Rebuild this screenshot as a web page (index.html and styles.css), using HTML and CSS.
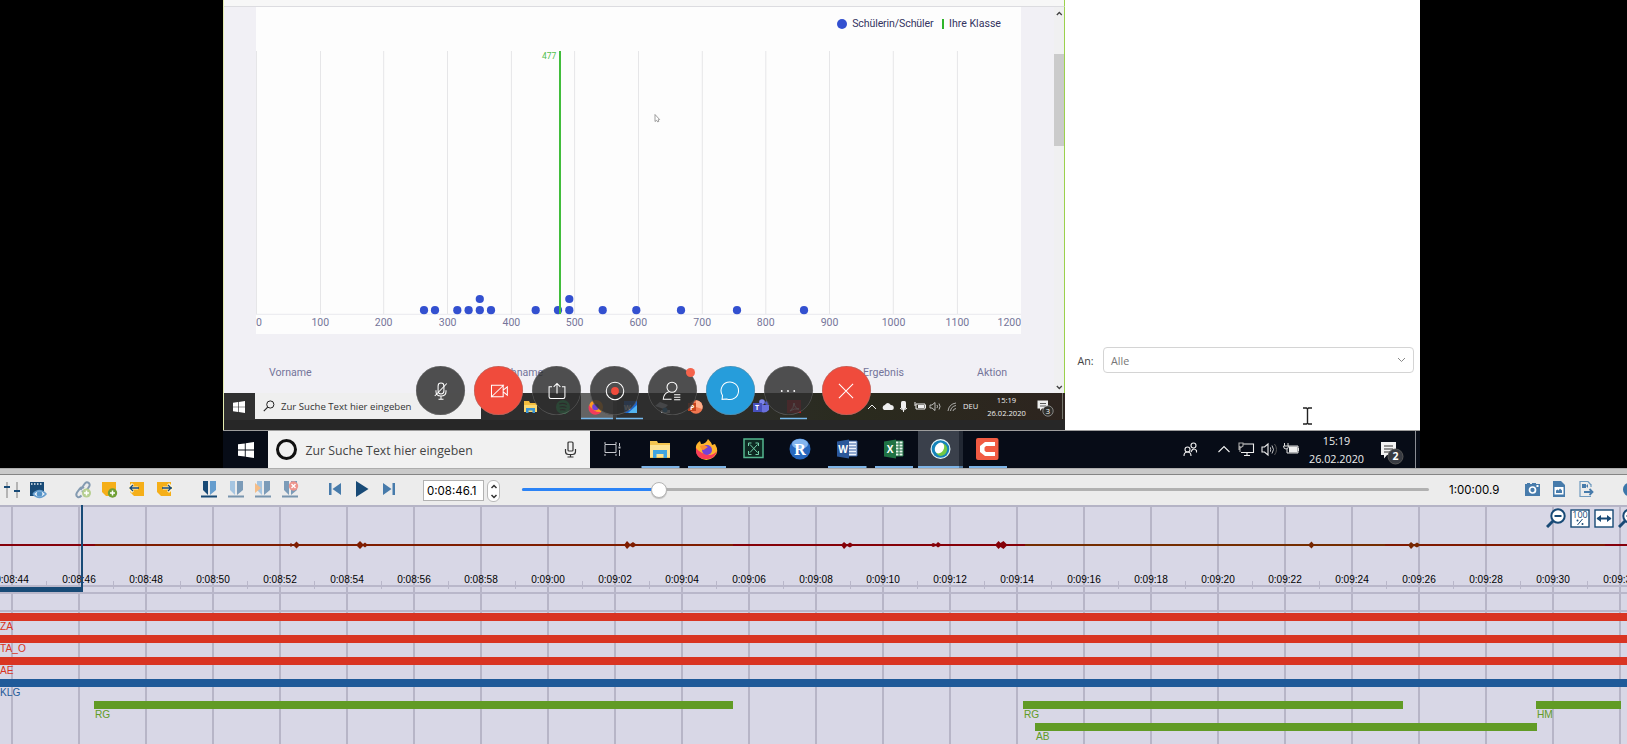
FILE: index.html
```
<!DOCTYPE html>
<html lang="de">
<head>
<meta charset="utf-8">
<title>Videoanalyse</title>
<link rel="stylesheet" href="styles.css">
</head>
<body>
<main class="app">
  <section class="video">
    <div class="desktop">
      <div class="upper">
        <div class="shared">
          <div class="browser-strip"></div>
          <div class="page">
            <div class="page-main">
              <div class="card">
                <div class="legend"><i class="dot"></i><span class="lg1">Schülerin/Schüler</span><i class="tick"></i><span class="lg2">Ihre Klasse</span></div>
                <svg class="chart" width="765" height="286" viewBox="256 48 765 286">
                  <path d="M256.5 51V314M320.5 51V314M383.7 51V314M447.5 51V314M511.4 51V314M574.6 51V314M638.5 51V314M702.3 51V314M765.8 51V314M829.5 51V314M893.3 51V314M957.4 51V314" stroke="#e6e6e8"/>
                  <path d="M256 314.3H1021" stroke="#e9e9ee"/>
                  <g fill="#3350d0">
                    <circle cx="424" cy="310.2" r="4.1"/><circle cx="435" cy="310.2" r="4.1"/><circle cx="457.3" cy="310.2" r="4.1"/><circle cx="468.6" cy="310.2" r="4.1"/><circle cx="479.8" cy="310.2" r="4.1"/><circle cx="491" cy="310.2" r="4.1"/><circle cx="535.7" cy="310.2" r="4.1"/><circle cx="558" cy="310.2" r="4.1"/><circle cx="569.3" cy="310.2" r="4.1"/><circle cx="602.7" cy="310.2" r="4.1"/><circle cx="636.3" cy="310.2" r="4.1"/><circle cx="681" cy="310.2" r="4.1"/><circle cx="737" cy="310.2" r="4.1"/><circle cx="804" cy="310.2" r="4.1"/>
                    <circle cx="479.8" cy="299" r="4.1"/><circle cx="569.3" cy="299" r="4.1"/>
                  </g>
                  <path d="M560 51V314" stroke="#41bd3c" stroke-width="2"/>
                  <text x="556.3" y="59.300" class="mean">477</text>
                  <g class="axis">
                    <text x="259" y="326">0</text><text x="320.300" y="326">100</text><text x="383.600" y="326">200</text><text x="447.600" y="326">300</text><text x="511.400" y="326">400</text><text x="574.600" y="326">500</text><text x="638.300" y="326">600</text><text x="702.200" y="326">700</text><text x="765.700" y="326">800</text><text x="829.500" y="326">900</text><text x="893.500" y="326">1000</text><text x="957.400" y="326">1100</text><text x="1009.300" y="326">1200</text>
                  </g>
                  <path d="M655 114.500v7l1.600-1.200 1.200 1.700 1-.6-.7-1.600 1.500-.3z" fill="#fff" stroke="#777" stroke-width=".7"/>
                </svg>
              </div>
              <div class="thead"><span class="c1">Vorname</span><span class="c2">Nachname</span><span class="c3">Ergebnis</span><span class="c4">Aktion</span></div>
            </div>
            <div class="scrollbar">
              <svg width="10" height="386" viewBox="0 0 10 386"><rect y="47" width="10" height="92" fill="#cbcbcb"/><path d="M2.800 8l2.500-2.500L7.800 8M2.800 379l2.500 2.500 2.500-2.500" fill="none" stroke="#444" stroke-width="1.300"/></svg>
            </div>
          </div>
          <div class="inner-bar">
            <div class="in-start"><svg width="12" height="12" viewBox="0 0 16 16"><path d="M0 2.300L6.800 1.400V7.600H0zM7.700 1.200L16 0V7.600H7.700zM0 8.400H6.800V14.600L0 13.700zM7.700 8.400H16V16L7.700 14.800z" fill="#fff"/></svg></div>
            <div class="in-search"><svg width="12" height="12" viewBox="0 0 12 12"><circle cx="7.300" cy="4.500" r="3.600" fill="none" stroke="#222"/><path d="M4.700 7.200L.8 11.200" stroke="#222" stroke-width="1.100"/></svg><span>Zur Suche Text hier eingeben</span></div>
            <svg class="in-apps" width="384" height="27" viewBox="481 393 384 27">
              <rect x="581" y="393" width="32" height="26" fill="#646464"/><rect x="613" y="393" width="4" height="26" fill="#3c3c3c"/>
              <path d="M524 401h5l1 2h7v9h-13z" fill="#f3bd3e"/><path d="M524 405h13v7h-13z" fill="#fbd971"/><path d="M526 413v-5h9v5h-2.500v-2.500h-4V413z" fill="#3a95d5"/>
              <circle cx="563" cy="407" r="7" fill="#1ec15c"/><path d="M559 404q4-1.500 8 .5M559.500 407q3.500-1 7 .5M560 410q3-1 5.500.3" fill="none" stroke="#222" stroke-width="1.200"/>
              <circle cx="596" cy="407" r="7" fill="#ff9a22"/><path d="M589 405a7 7 0 0 0 12 7q-7 1-12-7" fill="#f33b5c"/><circle cx="595.500" cy="407" r="3.300" fill="#7040d8"/>
              <rect x="624" y="401" width="13" height="12" fill="#1d66d0"/><path d="M628 413l9-8v8z" fill="#52b4f0"/><text x="624" y="410" class="glyph">W</text>
              <path d="M655 406l5-4 8 3-4 4zM661 410h9v3h-9z" fill="#b8c0cb"/><circle cx="665" cy="410" r="2.500" fill="#247bb8"/>
              <circle cx="696" cy="407" r="6.700" fill="#f17750"/><path d="M696 407v-6.700a6.700 6.700 0 0 1 6.300 8.700z" fill="#ffae8a"/><rect x="688" y="403" width="8" height="8" fill="#c4431f"/><text x="690" y="410" class="glyph">P</text>
              <circle cx="762" cy="402" r="2.800" fill="#7b83eb"/><circle cx="767" cy="403" r="2" fill="#5059c9"/><path d="M758 405h11v5q-5 5-11 0z" fill="#6970dc"/><rect x="753" y="403" width="9" height="9" fill="#4750bd"/><text x="755" y="410" class="glyph">T</text>
              <rect x="787" y="400" width="14" height="13" fill="#c20d1a"/><path d="M790 411q4-3 4-8 1 6 5 6-5-1-9 2" fill="none" stroke="#fff" stroke-width=".8"/>
              <path d="M581 418.500h32M616 418.500h27M780 418.500h27" stroke="#75b9ed" stroke-width="1.500"/>
            </svg>
            <svg class="in-tray" width="97" height="26" viewBox="866 393 97 26">
              <path d="M868 409l4-4 4 4" fill="none" stroke="#eee"/><path d="M884 410a2.700 2.700 0 0 1 .8-5q3-4 6 0 3 0 3 3 0 2-2 2z" fill="#eee"/><rect x="901" y="401" width="5" height="8" rx="1.500" fill="#eee"/><path d="M903.500 409v3M900 408q3.500 4 7 0" stroke="#eee" fill="none"/><path d="M916 404h9v5h-9zM925.500 405v3M915 402v4" stroke="#eee" fill="none"/><rect x="918" y="405" width="6" height="3" fill="#eee"/><path d="M930 405h2l3-2.500v8l-3-2.500h-2zM937 405q1 1.500 0 3M939 403.500q2 3 0 6" fill="none" stroke="#ddd" stroke-width=".8"/><path d="M948 411q1-7 8-8M950.500 411q.5-4.500 5.500-5.500M953 411q0-2 3-2.500" fill="none" stroke="#ccc" stroke-width=".8"/>
            </svg>
            <span class="deu">DEU</span>
            <div class="in-clock"><span>15:19</span><span>26.02.2020</span></div>
            <svg width="28" height="26" viewBox="1036 393 28 26"><path d="M1037.500 400.500h10.500v8h-6l-2 2.500V408.500h-2.500z" fill="#eee"/><path d="M1040 403.500h6M1040 406h6" stroke="#333" stroke-width=".8"/><circle cx="1048" cy="411" r="5.200" fill="#302f2b" stroke="#aaa" stroke-width=".7"/><text x="1045.800" y="414" class="glyph7">3</text><path d="M1062.500 393v26" stroke="#77776e"/></svg>
          </div>
          <div class="inner-foot"></div>
        </div>
        <div class="chat">
          <div class="to"><label>An:</label><div class="select"><span>Alle</span><svg width="9" height="6" viewBox="0 0 9 6"><path d="M1 1l3.500 3.500L8 1" fill="none" stroke="#888"/></svg></div></div>
          <svg class="ibeam" width="11" height="18" viewBox="0 0 11 18"><path d="M1 1h3.500l1 1 1-1H10M5.500 2v14M1 17h3.500l1-1 1 1H10" fill="none" stroke="#222" stroke-width="1.400"/></svg>
        </div>
      </div>
      <div class="taskbar">
        <div class="start"><svg width="16" height="16" viewBox="0 0 16 16"><path d="M0 2.300L6.800 1.400V7.600H0zM7.700 1.200L16 0V7.600H7.700zM0 8.400H6.800V14.600L0 13.700zM7.700 8.400H16V16L7.700 14.800z" fill="#fff"/></svg></div>
        <div class="search"><i class="ring"></i><span>Zur Suche Text hier eingeben</span><svg width="13" height="17" viewBox="0 0 13 17"><rect x="4" y="1" width="5" height="9" rx="1" fill="none" stroke="#333" stroke-width="1.200"/><path d="M1.500 8v2.500q0 3 3 3h4q3 0 3-3V8M6.500 13.500V16M3.500 16h6" fill="none" stroke="#333" stroke-width="1.200"/></svg></div>
        <svg class="apps" width="430" height="37" viewBox="590 431 430 37">
          <rect x="918" y="431" width="41" height="37" fill="#3a404b"/><rect x="959" y="431" width="4" height="37" fill="#222833"/>
          <path d="M605 444v-2M616 444v-2M605 454v2M616 454v2M605 444.500h11v8h-11zM619.500 443v3M619.500 450v6" fill="none" stroke="#c8cad0"/><rect x="618.500" y="446.500" width="2" height="2" fill="#c8cad0"/>
          <path d="M650 441h7l1 2h12v15h-20z" fill="#f4c550"/><path d="M650 445h20v12h-20z" fill="#fde394"/><path d="M653 458v-8h14v8h-3.500v-4h-7v4z" fill="#41a5e1"/>
          <path d="M696 450q-1-6 4-9l1 3q5 0 7-5 4 4 4 6l3-1q5 8-1 13-8 6-15 0-3-3-3-7" fill="#ffb42d"/><path d="M696 448q-1 12 12 11 7-1 9-8-5 6-12 3-6-2-9-6" fill="#f83c59"/><circle cx="707" cy="450" r="5" fill="#7442d7"/><path d="M700 446q4-2 8 1l-3 2q-3 3-5-3" fill="#ff8b31"/>
          <rect x="744" y="439" width="19" height="18.500" fill="#0e2922" stroke="#54b68f" stroke-width="1.500"/><path d="M748.500 446v-3h3M755.500 443h3v3M758.500 451v3.500h-3M751.500 454.500h-3V451M750 444.500l7.500 8M757.500 444.500l-7.500 8" fill="none" stroke="#75d1ab"/>
          <circle cx="800" cy="449" r="10.500" fill="#2767bd"/><ellipse cx="800" cy="444" rx="8" ry="5" fill="#83b5ee"/><text x="800" y="455" class="rglyph">R</text>
          <path d="M848 441h9v15h-9z" fill="#eef3fb" stroke="#315aa0"/><path d="M849 444h7M849 447h7M849 450h7M849 453h7" stroke="#315aa0"/><path d="M837 441.500l12-2v19l-12-2z" fill="#2b579a"/><text x="843" y="453" class="office">W</text>
          <path d="M895 441h8v15h-8z" fill="#e8f5ec" stroke="#217346"/><path d="M896 444h7M896 447h7M896 450h7M896 453h7M899 441v15" stroke="#217346"/><path d="M884 441.500l12-2v19l-12-2z" fill="#1f7244"/><text x="890" y="453" class="office">X</text>
          <circle cx="940.500" cy="449" r="10" fill="#e8f5f9"/><circle cx="940.500" cy="449" r="8.800" fill="#1583ba"/><ellipse cx="941.500" cy="450" rx="5.500" ry="6.300" fill="#72c944" transform="rotate(30 942 450)"/><ellipse cx="939.500" cy="448" rx="4.300" ry="5.800" fill="#fff" transform="rotate(30 939.500 448)"/>
          <rect x="976" y="438" width="22.500" height="22" rx="2" fill="#f15b43"/><path d="M995 442h-10l-5 4v6l5 4h10v-4h-9l-1.500-1.500v-3l1.500-1.500h9z" fill="#fff"/>
          <path d="M641.500 467h38M688 467h38M828 467h38.500M875 467h38M918 467h41M969 467h38" stroke="#7db3e6" stroke-width="2"/><path d="M959 467h4" stroke="#52799f" stroke-width="2"/>
        </svg>
        <svg class="tray" width="90" height="37" viewBox="1180 431 90 37"><g fill="none" stroke="#eee" stroke-width="1.100"><circle cx="1193.500" cy="445.500" r="2.500"/><path d="M1191 452q2-5 5.500-1.500v2"/><circle cx="1187.500" cy="449.500" r="2.500"/><path d="M1184 456q0-4 3.500-4t3.500 4M1218.500 452l5.500-5.500 5.500 5.500"/><path d="M1243 444h10.500v8.500H1241M1247 453v2.500M1244 455.500h6"/><path d="M1239 443h4v3l-4 3zM1240 446v6" stroke="#aaa"/><path d="M1262 447h2.500l3.500-3v11l-3.500-3H1262z"/></g></svg>
        <svg width="30" height="37" viewBox="1270 431 30 37"><g fill="none" stroke="#ddd"><path d="M1270 447q1.500 2.500 0 5M1272 445.500q3 4 0 8" stroke-width=".9"/><path d="M1274.500 444q4 5.500 0 11" stroke="#555"/><path d="M1288 446h10v7h-11v-4M1298.500 448v3M1284.500 443v3M1288 443v3M1283.500 446h5q0 3-2.500 3t-2.500-3"/></g><rect x="1289" y="446.500" width="8.500" height="6" fill="#eee"/></svg>
        <div class="clock"><span>15:19</span><span>26.02.2020</span></div>
        <svg width="52" height="37" viewBox="1368 431 52 37"><path d="M1381 442h15v13h-9l-3 3.500V455h-3z" fill="#f2f2f2"/><path d="M1384 446h9M1384 449h9M1384 452h6" stroke="#333"/><circle cx="1395.500" cy="456.500" r="7.500" fill="#383b42" stroke="#555"/><text x="1395.500" y="460.200" class="badge">2</text><path d="M1415.500 431v37" stroke="#8a8d94"/></svg>
      </div>
      <div class="controls">
        <div class="btn"><svg viewBox="0 0 24 24"><rect x="8.500" y="2.500" width="7" height="13" rx="3.500"/><path d="M6 11v2q0 5 6 5t6-5v-2M12 18v4M9 22h6M4.500 18L19 3"/></svg></div>
        <div class="btn red"><svg viewBox="0 0 24 24"><path d="M3 5h14v14H3zM17 11l5-4v10l-5-4M2.500 19.500L18 4.500"/></svg></div>
        <div class="btn"><svg viewBox="0 0 24 24"><path d="M6 7H2.500v12q0 2 2 2h15q2 0 2-2V7H18M12 15V3M8 7l4-4 4 4"/></svg></div>
        <div class="btn"><svg viewBox="0 0 24 24"><circle cx="12" cy="12" r="10.500"/><circle cx="12" cy="12" r="4.700" class="rec"/></svg></div>
        <div class="btn"><i class="note"></i><svg viewBox="0 0 24 24"><circle cx="12" cy="7.500" r="6"/><path d="M8 13q-6 2-6.500 9h10M14.500 16.500H22M14.500 19.500H22M14.500 22.500H22"/></svg></div>
        <div class="btn blue"><svg viewBox="0 0 24 24"><path d="M2.500 22L3 17.500A10.500 10.500 0 1 1 8 21.500z"/></svg></div>
        <div class="btn"><svg viewBox="0 0 24 24" class="solid"><circle cx="4.500" cy="12" r="1.100"/><circle cx="12" cy="12" r="1.100"/><circle cx="19.500" cy="12" r="1.100"/></svg></div>
        <div class="btn red"><svg viewBox="0 0 24 24"><path d="M3.500 3.500l17 17M20.500 3.500l-17 17"/></svg></div>
      </div>
    </div>
  </section>
  <div class="splitter"></div>
  <section class="toolbar">
    <div class="group g1">
      <svg width="18" height="20" viewBox="0 0 18 20"><path d="M4 2v16M14 2v16" stroke="#b4b4b4" stroke-width="2"/><path d="M1 7h6M11 11h6" stroke="#184a76" stroke-width="2"/></svg>
      <svg width="18" height="20" viewBox="0 0 18 20"><path d="M0 2h14v14H0z" fill="#184a76"/><path d="M1 4h12" stroke="#e8eef3" stroke-dasharray="1.500 1.500" stroke-width="1.500"/><path d="M3 14q6.500-7 13 0-6.500 7-13 0" fill="#e9f1f8" stroke="#659dce" stroke-width="1.500"/><circle cx="9.500" cy="14" r="2.800" fill="#5392c8"/></svg>
    </div>
    <div class="group g2">
      <svg width="18" height="20" viewBox="0 0 18 20"><g fill="none" stroke="#849bb1" stroke-width="2"><path d="M5.500 10l4-6q2-3 4.500-.8 1.500 2-.5 4.300L11 11q-2 2-4 0M9 8q-2-1.500-4 .5l-3 4q-1.700 3 .7 4.500 2 .6 3.800-1.500"/></g><circle cx="11.500" cy="13" r="4.500" fill="#b6cf91"/><path d="M11.500 10.500v5M9 13h5" stroke="#fff" stroke-width="1.500"/></svg>
      <svg width="18" height="20" viewBox="0 0 18 20"><path d="M0 2h14v14H4l-4-4z" fill="#f5af19"/><circle cx="10.500" cy="13" r="4.700" fill="#6f9f35"/><path d="M10.500 10.500v5M8 13h5" stroke="#fff" stroke-width="1.500"/></svg>
      <svg width="18" height="20" viewBox="0 0 18 20"><path d="M1 2h14v14H5l-4-4z" fill="#f5af19"/><path d="M0 8h9M4 4L0 8l4 4" stroke="#fff3d0" stroke-width="3" fill="none"/><path d="M1 8h9M4 5L1 8l3 3" stroke="#184a76" stroke-width="1.300" fill="none"/></svg>
      <svg width="18" height="20" viewBox="0 0 18 20"><path d="M1 2h14v14H5l-4-4z" fill="#f5af19"/><path d="M7 8h9M12 4l4 4-4 4" stroke="#fff3d0" stroke-width="3" fill="none"/><path d="M6 8h10M12 5l3 3-3 3" stroke="#184a76" stroke-width="1.300" fill="none"/></svg>
    </div>
    <div class="group g3">
      <svg width="18" height="20" viewBox="0 0 18 20"><path d="M2 1h5v14l-5-5z" fill="#184a76"/><path d="M9 1h6v9l-6 5z" fill="#659dce"/><path d="M0 16.500h16" stroke="#184a76" stroke-width="2"/></svg>
      <svg width="18" height="20" viewBox="0 0 18 20"><path d="M2 1h5v14l-5-5z" fill="#a5c5e1"/><path d="M9 1h6v9l-6 5z" fill="#7b9bb8"/><path d="M0 16.500h16" stroke="#7895ae" stroke-width="2"/></svg>
      <svg width="18" height="20" viewBox="0 0 18 20"><path d="M2 1h5v14l-5-5z" fill="#a5c5e1"/><path d="M0 3l6 5-6 5z" fill="#f5bd87"/><path d="M9 1h6v9l-6 5z" fill="#7b9bb8"/><path d="M0 16.500h16" stroke="#7895ae" stroke-width="2"/></svg>
      <svg width="18" height="20" viewBox="0 0 18 20"><path d="M2 1h5v14l-5-5zM9 1h6v9l-6 5z" fill="#7b9bb8"/><circle cx="11.500" cy="6" r="4.700" fill="#ee958d"/><path d="M9.500 4l4 4M13.500 4l-4 4" stroke="#fff" stroke-width="1.400"/><path d="M0 16.500h16" stroke="#7895ae" stroke-width="2"/></svg>
    </div>
    <div class="group g4">
      <svg width="18" height="20" viewBox="0 0 18 20"><path d="M1 3h2.500v12H1zM13 3v12L4.500 9z" fill="#477bab"/></svg>
      <svg width="18" height="20" viewBox="0 0 18 20"><path d="M1 1l12.500 8L1 17z" fill="#184a76"/></svg>
      <svg width="18" height="20" viewBox="0 0 18 20"><path d="M10.500 3H13v12h-2.500zM1 3v12l8.500-6z" fill="#477bab"/></svg>
    </div>
    <input class="time" value="0:08:46.1" aria-label="Zeit">
    <div class="stepper"><svg width="12" height="21" viewBox="0 0 12 21"><path d="M3.500 7L6 4.500 8.500 7M3.500 14L6 16.500 8.500 14" fill="none" stroke="#333" stroke-width="1.500"/></svg></div>
    <div class="slider"><div class="track"><div class="fill" style="width:15.1%"></div></div><i class="knob" style="left:15.1%"></i></div>
    <span class="total">1:00:00.9</span>
    <div class="group g5">
      <svg width="16" height="20" viewBox="0 0 16 20"><path d="M0 4h2V3h3v1h2V3h4v1h4v12H0z" fill="#477bab"/><circle cx="7.500" cy="10" r="3" fill="none" stroke="#fff" stroke-width="1.700"/><rect x="11.500" y="5" width="2" height="2" fill="#fff"/></svg>
      <svg width="16" height="20" viewBox="0 0 16 20"><path d="M1 1h8l4 4v12H1z" fill="#477bab"/><rect x="2.500" y="7" width="9" height="7.500" fill="#fff"/><path d="M4 13V10.500l1.500-1 1 1 1.500-2 2 2V13z" fill="#477bab"/></svg>
      <svg width="16" height="20" viewBox="0 0 16 20"><path d="M12 5L9 1.500H1v15h11M12 4v3" fill="none" stroke="#6f9abf" stroke-width="1.200"/><path d="M3 4h4v4H3zM7 6l2-2v4z" fill="#477bab"/><path d="M5 12h8M10.500 9l3 3-3 3" fill="none" stroke="#477bab" stroke-width="1.800"/></svg>
      <svg class="edge" width="16" height="20" viewBox="0 0 16 20"><circle cx="7" cy="9.500" r="7" fill="#3a76a9"/></svg>
    </div>
  </section>
  <section class="timeline">
    <div class="wave">
      <svg class="signal" width="1627" height="86" viewBox="0 505 1627 86">
        <path d="M0 545h95" stroke="#85000b" stroke-width="2"/><path d="M95 545h638" stroke="#7f1d00" stroke-width="2"/><path d="M733 545h292" stroke="#850008" stroke-width="2"/><path d="M1025 545h360" stroke="#742d00" stroke-width="2"/><path d="M1385 545h220" stroke="#7f1900" stroke-width="2"/><path d="M1605 545h22" stroke="#85000b" stroke-width="2"/>
        <g fill="#7f1d00"><path d="M289 545l2-2 2 2 3.500-3.500 3.500 3.500-3.500 3.500-3.500-3.500-2 2zM356 545l4-4 3 3 2-1.500 3 2.500-3 2.500-2-1.500-3 3zM624 545l3-4 3 3 3-2 4 3-4 2.500-3-1.500-3 3z"/></g>
        <g fill="#850008"><path d="M841 545l3-3 3 2.500 3-2 4 2.500-4 2.500-3-1.500-3 3zM930 545l3-2 3 1 2-2 4 3-4 2.500-2-1.500-3 1zM995 545l3.500-4 2 2 3-2 4 4-4 4-3-2-2 2z"/></g>
        <path d="M1308 545l3.500-3.500 3 3.500-3 3.500zM1408 545l3-3 3 2.500 3-2 4 2.500-4 2.500-3-1.500-3 3z" fill="#762600"/>
      </svg>
      <div class="ticks"><span>0:08:44</span><span>0:08:46</span><span>0:08:48</span><span>0:08:50</span><span>0:08:52</span><span>0:08:54</span><span>0:08:56</span><span>0:08:58</span><span>0:09:00</span><span>0:09:02</span><span>0:09:04</span><span>0:09:06</span><span>0:09:08</span><span>0:09:10</span><span>0:09:12</span><span>0:09:14</span><span>0:09:16</span><span>0:09:18</span><span>0:09:20</span><span>0:09:22</span><span>0:09:24</span><span>0:09:26</span><span>0:09:28</span><span>0:09:30</span><span>0:09:32</span></div>
      <div class="played"></div>
      <div class="zoomers">
        <svg width="20" height="20" viewBox="0 0 20 20"><circle cx="12" cy="8" r="6.700" fill="#fff" stroke="#184a76" stroke-width="2"/><path d="M8.500 8h7" stroke="#184a76" stroke-width="2"/><path d="M7 13l-6 6" stroke="#184a76" stroke-width="3"/></svg>
        <svg width="20" height="20" viewBox="0 0 20 20"><rect x="1" y="2" width="18" height="17" fill="#fff" stroke="#184a76" stroke-width="1.400"/><text x="10" y="10.300" class="pct">100</text><path d="M12.500 11l-5 6" stroke="#184a76"/><circle cx="7.500" cy="12.500" r="1" fill="#184a76"/><circle cx="12.500" cy="16" r="1" fill="#184a76"/></svg>
        <svg width="20" height="20" viewBox="0 0 20 20"><rect x="1" y="2" width="18" height="17" fill="#fff" stroke="#184a76" stroke-width="1.400"/><path d="M3.500 10.500h13" stroke="#184a76" stroke-width="2"/><path d="M7 7v7l-4.500-3.500zM13 7v7l4.500-3.500z" fill="#184a76"/></svg>
        <svg width="20" height="20" viewBox="0 0 20 20"><circle cx="12" cy="8" r="6.700" fill="#fff" stroke="#184a76" stroke-width="2"/><path d="M8.500 8h7M12 4.500v7" stroke="#184a76" stroke-width="2"/><path d="M7 13l-6 6" stroke="#184a76" stroke-width="3"/></svg>
      </div>
    </div>
    <div class="gap"></div>
    <div class="rows">
      <div class="row"><div class="bar red-bar">ZA</div></div>
      <div class="row"><div class="bar red-bar">TA_O</div></div>
      <div class="row"><div class="bar red-bar">AE</div></div>
      <div class="row"><div class="bar blue-bar">KLG</div></div>
      <div class="row"><div class="bar green" style="margin-left:94px;width:639px">RG</div><div class="bar green" style="margin-left:290px;width:380px">RG</div><div class="bar green" style="margin-left:133px;width:85px">HM</div></div>
      <div class="row"><div class="bar green" style="margin-left:1035px;width:502px">AB</div></div>
    </div>
  </section>
</main>
</body>
</html>
```
FILE: styles.css
```
* { box-sizing: border-box; }
body { margin: 0; font-family: "Open Sans", "Noto Sans", sans-serif; }
svg { display: block; flex: none; }
.app { width: 1627px; height: 744px; overflow: hidden; display: flex; flex-direction: column; background: #d8d7e6; }

/* Video */
.video { height: 468px; flex: none; background: #000; padding-left: 223px; }
.desktop { position: relative; width: 1197px; height: 468px; display: flex; flex-direction: column; background: #fff; }
.upper { height: 431px; display: flex; border-bottom: 1px solid #9d9d9d; }
.shared { width: 842px; display: flex; flex-direction: column; border-left: 1px solid #e4ecb0; }
.browser-strip { height: 7px; background: #f7f7f7; border-bottom: 1px solid #dcdce0; border-right: 1px solid #9bd14c; }
.page { height: 386px; display: flex; background: #f1f0f5; border-right: 1px solid #9bd14c; }
.page-main { width: 830px; }
.card { width: 765px; height: 327px; margin-left: 32px; background: #fdfdfd; display: flex; flex-direction: column; }
.legend { height: 41px; display: flex; align-items: center; padding: 0 20px 8px 0; justify-content: flex-end; font: 10.600px Roboto, sans-serif; color: #33335f; }
.legend .dot { width: 10px; height: 10px; border-radius: 50%; background: #3350d0; margin-right: 5px; }
.lg1 { letter-spacing: -.12px; }
.legend .tick { width: 1.500px; height: 10px; background: #2fb52a; margin: 0 5.500px 0 8.500px; }
.chart .mean { font: 8.500px Roboto, sans-serif; fill: #52be4d; text-anchor: end; }
.chart .axis { font: 10.500px Roboto, sans-serif; fill: #75759a; text-anchor: middle; }
.thead { display: flex; font: 10.600px/14px Roboto, sans-serif; color: #74749a; padding: 32px 0 0 45px; }
.c1 { width: 223px; } .c2 { width: 371px; } .c3 { width: 114px; }
.scrollbar { width: 10px; background: #f0f0f1; }
.inner-bar { height: 27px; display: flex; background: linear-gradient(90deg, #2e2e2e 55%, #2a2b1e 75%, #2d241f); color: #eee; font-size: 8px; }
.in-start { width: 31px; background: #303030; display: flex; align-items: center; justify-content: center; padding-right: 1px; }
.in-search { width: 226px; height: 26px; background: #efefef; display: flex; align-items: center; gap: 6px; padding-left: 8px; color: #333; font-size: 9.600px; white-space: nowrap; }
.in-apps { margin-right: 1px; }
.deu { width: 15px; line-height: 26px; white-space: nowrap; font-size: 7.600px; }
.in-clock { width: 58px; text-align: center; font-size: 7.600px; line-height: 12.500px; display: flex; flex-direction: column; padding: 1px 1px 0 0; }
.glyph { font: bold 7px "Open Sans", sans-serif; fill: #fff; }
.glyph7 { font: 7.500px "Open Sans", sans-serif; fill: #fff; }
.inner-foot { flex: 1; background: #272727; }
.chat { flex: 1; background: #fff; padding: 347px 6px 0 12.500px; display: flex; flex-direction: column; }
.to { height: 26px; display: flex; align-items: center; color: #444; font-size: 10.700px; }
.to label, .select span { padding-top: 1px; }
.to label { width: 25.500px; }
.select { flex: 1; height: 26px; border: 1px solid #d4d4d4; border-radius: 4px; display: flex; align-items: center; justify-content: space-between; padding: 0 7px; color: #777; }
.ibeam { margin: 34px 0 0 224px; }
.taskbar { height: 37px; background: #070c17; display: flex; color: #eee; }
.start { width: 45px; display: flex; align-items: center; justify-content: center; }
.search { width: 322px; background: #f1f1f1; display: flex; align-items: center; color: #444; font-size: 12.300px; padding: 0 13px 0 8px; }
.search span { flex: 1; padding: 1px 0 0 8.500px; white-space: nowrap; }
.ring { width: 21px; height: 21px; border: 3px solid #111; border-radius: 50%; }
.apps { margin-right: 160px; }
.clock { width: 68px; padding-left: 5px; display: flex; flex-direction: column; align-items: center; padding-top: 1px; font-size: 10.800px; line-height: 17.500px; }
.rglyph { font: bold 16px "Liberation Serif", serif; fill: #fff; text-anchor: middle; }
.office { font: bold 10px "Open Sans", sans-serif; fill: #fff; text-anchor: middle; }
.badge { font: bold 10.500px "Open Sans", sans-serif; fill: #fff; text-anchor: middle; }

/* Meeting controls float over the shared screen */
.controls { position: absolute; left: 193.400px; top: 366px; display: flex; gap: 8.900px; }
.btn { position: relative; width: 49px; height: 49px; border-radius: 50%; background: rgba(47, 47, 47, .84); display: flex; align-items: center; justify-content: center; box-shadow: inset 0 0 0 .6px rgba(130, 130, 130, .5); }
.btn svg { width: 20px; height: 20px; fill: none; stroke: #fff; stroke-width: 1.250; }
.btn .solid { fill: #fff; stroke: none; }
.btn .rec { fill: #f04b3c; stroke: none; }
.btn.red { background: #f04b3c; }
.btn.blue { background: #269ddb; }
.note { position: absolute; right: 2px; top: 2px; width: 9px; height: 9px; border-radius: 50%; background: #f5634c; }

/* Player toolbar */
.splitter { height: 7px; flex: none; background: #cacaca; border-top: 1px solid #adadad; border-bottom: 1px solid #858585; }
.toolbar { height: 30px; flex: none; background: #ececec; display: flex; align-items: flex-start; overflow: hidden; }
.toolbar > * { flex: none; }
.group { display: flex; gap: 9px; padding-top: 5px; }
.g1 { margin-left: 3px; } .g2 { margin-left: 27px; } .g3 { margin-left: 27px; } .g4 { margin-left: 28px; }
.time { width: 61px; height: 21px; margin: 5px 0 0 23px; padding: 1px 0 0 3px; border: 1px solid #b2b2b2; background: #fff; font: 11.500px Inter, sans-serif; color: #000; border-radius: 0; }
.stepper { width: 13px; height: 22px; margin: 5px 0 0 3px; border: 1px solid #b9b9b9; border-radius: 6px; background: #fff; display: flex; justify-content: center; }
.slider { position: relative; width: 907px; height: 30px; margin-left: 22px; }
.track { height: 3px; margin-top: 13px; background: #b1b1b1; border-radius: 2px; }
.fill { height: 3px; background: #2b83f6; border-radius: 2px; }
.knob { position: absolute; top: 7px; width: 16px; height: 16px; margin-left: -8px; border-radius: 50%; background: #fff; border: 1px solid #b5b5b5; box-shadow: 0 1px 1px #0003; }
.total { width: 76px; margin-left: 20px; padding-top: 8px; font: 11.500px/15px Inter, sans-serif; color: #000; }
.g5 { gap: 11px; }
.g5 .edge { margin-left: 17px; }

/* Timeline: a grid line every 67px stands for two seconds */
.timeline { flex: 1; display: flex; flex-direction: column; background: repeating-linear-gradient(90deg, #b7b5c7 0 2px, transparent 2px 67px) 11px 0 / 1742px 100% repeat-x; }
.wave { position: relative; height: 89px; border-top: 2px solid #b5b4c6; border-bottom: 2px solid #b9b7ca; display: grid; flex: none; }
.signal { grid-area: 1 / 1; margin-top: -2px; }
.ticks { grid-area: 1 / 1; align-self: end; height: 20px; margin: 0 0 0 -21.500px; width: 1675px; display: flex; font: 10.100px/12px "Liberation Sans", Arial, sans-serif; color: #000;
  background: linear-gradient(#b9b7ca, #b9b7ca) 0 12.500px / 100% 2px no-repeat, repeating-linear-gradient(90deg, #b9b7ca 0 1px, transparent 1px 67px) 0 9px / 100% 8px no-repeat; }
.ticks span { width: 67px; flex: none; text-align: center; margin-top: 2px; }
.played { position: absolute; left: 0; top: -2px; width: 83px; height: 87px; border-right: 2px solid #184a76; border-bottom: 5px solid #184a76; }
.zoomers { position: absolute; left: 1546px; top: 1px; display: flex; gap: 4px; }
.pct { font: 9px "Open Sans", sans-serif; fill: #184a76; text-anchor: middle; }
.gap { height: 18px; flex: none; border-bottom: 2px solid #b9b7ca; }
.rows { padding-top: 1px; }
.row { height: 22px; display: flex; }
.bar { height: 8px; flex: none; padding: 8px 0 0 1px; font: 10.200px/12px "Liberation Sans", Arial, sans-serif; }
.red-bar { width: 1627px; background: #d93422; color: #d93422; padding-left: 0; }
.blue-bar { width: 1627px; background: #1f5a99; color: #1f5a99; padding-left: 0; }
.green { background: #619b25; color: #619b25; }
```
